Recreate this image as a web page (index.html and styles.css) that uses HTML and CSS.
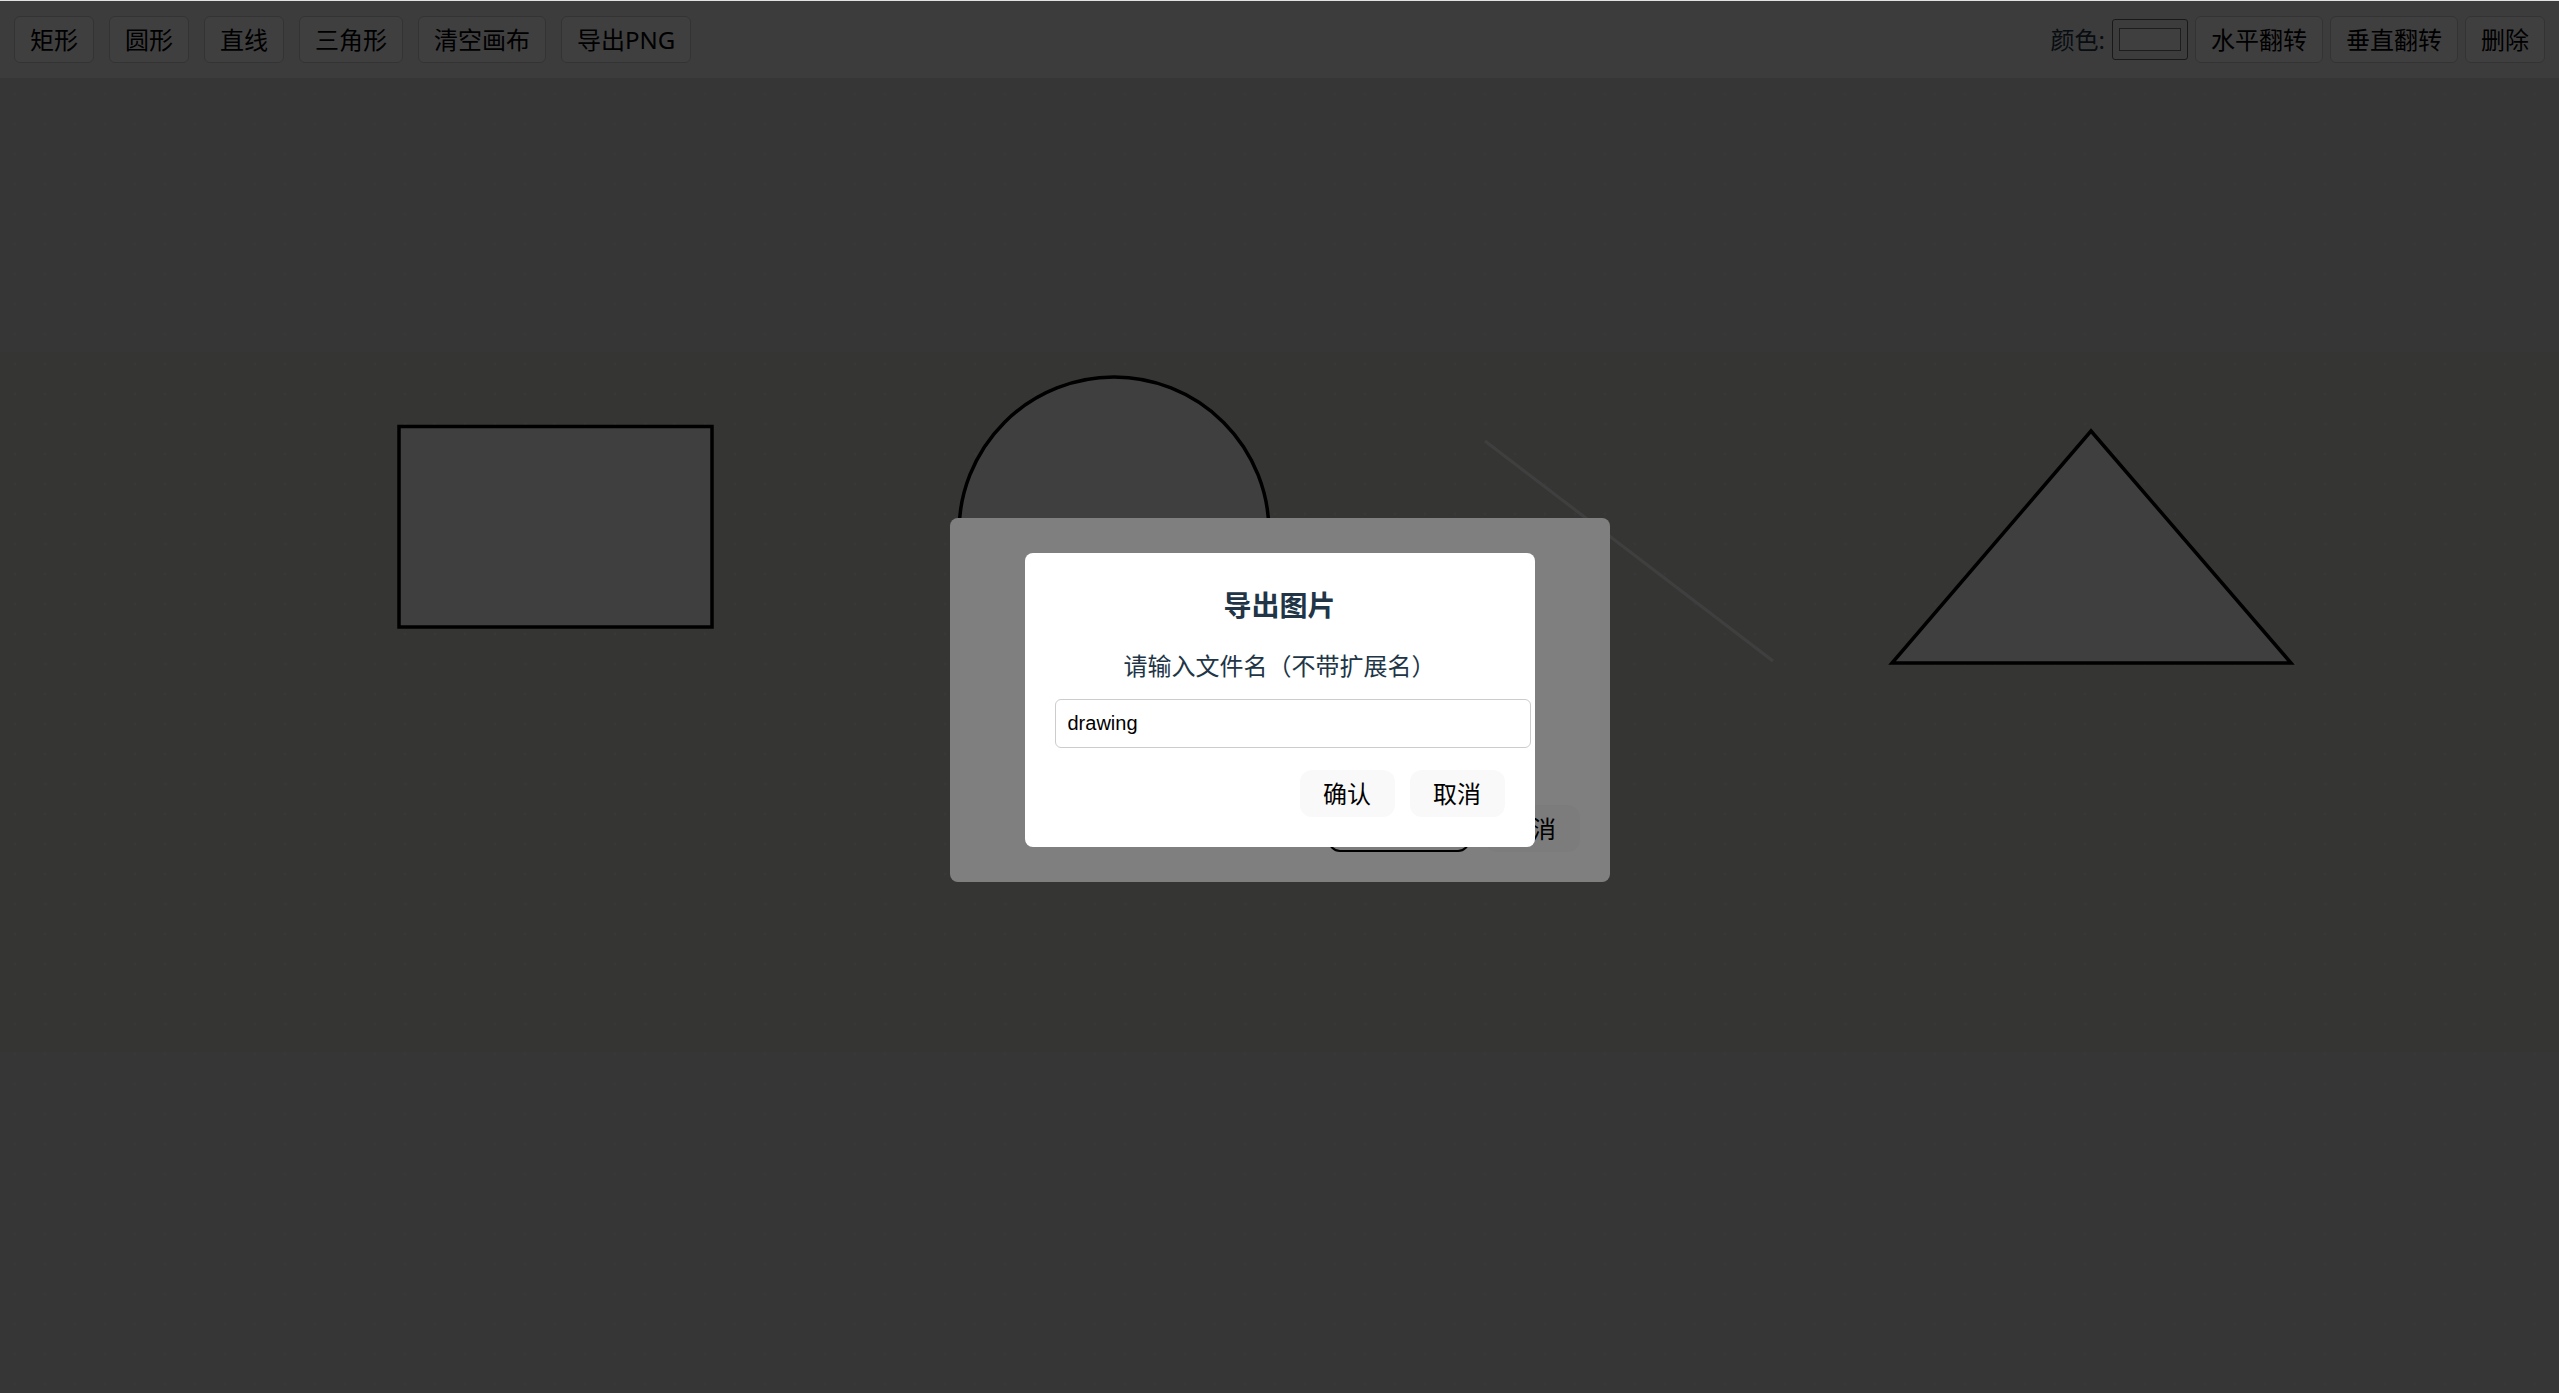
FILE: index.html
```html
<!DOCTYPE html>
<html lang="zh-CN">
<head>
<meta charset="utf-8">
<title>画板</title>
<link rel="stylesheet" href="styles.css">
</head>
<body>
<div class="app">
  <header class="toolbar">
    <div class="tools">
      <button class="tool" type="button">矩形</button>
      <button class="tool" type="button">圆形</button>
      <button class="tool" type="button">直线</button>
      <button class="tool" type="button">三角形</button>
      <button class="tool" type="button">清空画布</button>
      <button class="tool" type="button">导出PNG</button>
    </div>
    <div class="props">
      <label for="color">颜色:</label>
      <input class="color" id="color" type="color" value="#ffffff">
      <button class="tool" type="button">水平翻转</button>
      <button class="tool" type="button">垂直翻转</button>
      <button class="tool" type="button">删除</button>
    </div>
  </header>
  <main class="board">
    <svg class="shapes" aria-hidden="true">
      <g fill="#fff" stroke="#000" stroke-width="3.5">
        <rect x="399" y="347.500" width="313" height="200.500"/>
        <circle cx="1114" cy="453" r="155"/>
        <path d="M2091 352L2291 584H1892Z"/>
      </g>
      <path d="M1485 362L1773 582" stroke="#fff" stroke-width="3"/>
    </svg>
  </main>
</div>

<div class="overlay">
  <section class="dialog dialog-wide">
    <div class="actions">
      <button class="action focused" type="button">确认清空</button>
      <button class="action" type="button">取消</button>
    </div>
  </section>
</div>

<div class="overlay">
  <section class="dialog dialog-export" role="dialog" aria-labelledby="export-title">
    <h3 class="title" id="export-title">导出图片</h3>
    <label class="prompt" for="filename">请输入文件名（不带扩展名）</label>
    <input class="filename" id="filename" type="text" value="drawing">
    <div class="actions">
      <button class="action" type="button">确认</button>
      <button class="action" type="button">取消</button>
    </div>
  </section>
</div>
</body>
</html>
```

FILE: styles.css
```css
* {
  box-sizing: border-box;
}

body {
  margin: 0;
  color: #213547;
  font: 24px/36px "Noto Sans", "Noto Sans CJK SC", sans-serif;
}

button,
input {
  color: #000;
  font-family: inherit;
}

.app {
  display: flex;
  flex-direction: column;
  min-height: 100vh;
  border-top: 1px solid #dfe3e2;
}

.toolbar {
  display: flex;
  align-items: center;
  justify-content: space-between;
  padding: 15px 14px;
  border-bottom: 1px solid #d8d8d8;
  background: #f0f0f0;
}

.tools,
.props {
  display: flex;
  align-items: center;
  gap: 15px;
}

.props {
  gap: 7px;
}

.tool {
  height: 47px;
  padding: 0 15px;
  border: 1px solid #ccc;
  border-radius: 6px;
  background: #fff;
  font-size: 24px;
  line-height: 36px;
}

.color {
  width: 76px;
  height: 41px;
  padding: 4px;
  border: 1px solid #666;
  border-radius: 3px;
  background: #f0f0f0;
}

.board {
  display: flex;
  flex: 1;
  background:
    radial-gradient(circle, #e2e2e2 1px, transparent 2px) 0 0 / 30px 30px,
    linear-gradient(#d5d4cc, #d5d4cc) 0 273px / 100% 700px no-repeat,
    #d8d8d8;
}

.shapes {
  flex: 1;
}

.overlay {
  position: fixed;
  inset: 1px 0 0;
  display: flex;
  align-items: center;
  justify-content: center;
  padding-top: 6px;
  background: rgba(0, 0, 0, 0.5);
}

.dialog {
  display: flex;
  flex-direction: column;
  padding: 30px;
  border-radius: 8px;
  background: #fff;
}

.dialog-wide {
  width: 660px;
  height: 364px;
  justify-content: flex-end;
}

.dialog-export {
  width: 510px;
}

.title {
  margin: 4px 0 25px;
  font-size: 28px;
  line-height: 36px;
  text-align: center;
}

.prompt {
  margin-bottom: 15px;
  text-align: center;
}

.filename {
  width: 476px;
  height: 49px;
  padding: 0 12px;
  border: 1px solid #ccc;
  border-radius: 6px;
  font: 20px "Liberation Sans", sans-serif;
}

.actions {
  display: flex;
  justify-content: flex-end;
  gap: 15px;
  margin-top: 22px;
}

.action {
  min-width: 95px;
  height: 47px;
  padding: 0 23px;
  border: 0;
  border-radius: 12px;
  background: #f9f9f9;
  font-size: 24px;
  line-height: 36px;
}

.focused {
  outline: 2px solid #000;
  outline-offset: -2px;
}
```
